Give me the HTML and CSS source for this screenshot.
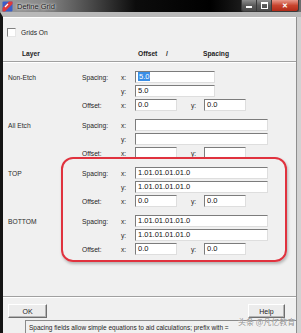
FILE: index.html
```
<!DOCTYPE html>
<html lang="en">
<head>
  <meta charset="UTF-8" />
  <title>Define Grid</title>
  <link rel="stylesheet" href="styles.css">
</head>
<body>
  <div class="window">
    <div class="titlebar">
      <svg class="app-icon" width="11" height="11" viewBox="0 0 11 11">
        <rect x="0.5" y="0.5" width="10" height="10" rx="1" fill="#3a5fc8" />
        <path d="M0.5 7 L7 0.5 L10.5 0.5 L10.5 3 L3 10.5 L0.5 10.5 Z" fill="#e03a3a" />
        <path d="M3 6 L6 3" stroke="#fff" stroke-width="1.2" />
      </svg>
      <span class="title">Define Grid</span>
      <div class="caption-btns">
        <span class="cbtn min"><i></i></span>
        <span class="cbtn max"><i></i></span>
        <span class="cbtn close">&#x2715;</span>
      </div>
    </div>

    <div class="frame">
      <div class="client">
        <label class="check"><span class="box"></span>Grids On</label>

        <div class="heads">
          <span class="h-layer">Layer</span>
          <span class="h-offset">Offset</span>
          <span class="h-slash">/</span>
          <span>Spacing</span>
        </div>
        <div class="rule"></div>

        <div class="group">
          <span class="layer">Non-Etch</span>
          <span class="sub">Spacing:</span><span class="ax">x:</span>
          <div class="field mid"><span class="sel">5.0</span></div>
          <span class="ax r2">y:</span>
          <div class="field mid">5.0</div>
          <span class="sub">Offset:</span><span class="ax">x:</span>
          <div class="pair"><div class="field short">0.0</div><span class="ay">y:</span><div class="field short">0.0</div></div>
        </div>

        <div class="group">
          <span class="layer">All Etch</span>
          <span class="sub">Spacing:</span><span class="ax">x:</span>
          <div class="field long"></div>
          <span class="ax r2">y:</span>
          <div class="field long"></div>
          <span class="sub">Offset:</span><span class="ax">x:</span>
          <div class="pair"><div class="field short"></div><span class="ay">y:</span><div class="field short"></div></div>
        </div>

        <div class="group">
          <span class="layer">TOP</span>
          <span class="sub">Spacing:</span><span class="ax">x:</span>
          <div class="field long">1.01.01.01.01.0</div>
          <span class="ax r2">y:</span>
          <div class="field long">1.01.01.01.01.0</div>
          <span class="sub">Offset:</span><span class="ax">x:</span>
          <div class="pair"><div class="field short">0.0</div><span class="ay">y:</span><div class="field short">0.0</div></div>
        </div>

        <div class="group">
          <span class="layer">BOTTOM</span>
          <span class="sub">Spacing:</span><span class="ax">x:</span>
          <div class="field long">1.01.01.01.01.0</div>
          <span class="ax r2">y:</span>
          <div class="field long">1.01.01.01.01.0</div>
          <span class="sub">Offset:</span><span class="ax">x:</span>
          <div class="pair"><div class="field short">0.0</div><span class="ay">y:</span><div class="field short">0.0</div></div>
        </div>

        <div class="footer">
          <div class="buttons">
            <span class="btn ok">OK</span>
            <span class="btn help">Help</span>
          </div>
        </div>
        <div class="status">
          <span class="status-left"></span>
          <span class="status-text">Spacing fields allow simple equations to aid calculations; prefix with =</span>
        </div>
      </div>
      <div class="strip"></div>
    </div>

    <div class="mark"></div>
    <div class="watermark">头条 @凡亿教育</div>
  </div>
</body>
</html>
```
FILE: styles.css
```
html, body {
  margin: 0;
  padding: 0;
}
body {
  width: 301px;
  height: 333px;
  overflow: hidden;
  font-family: "Liberation Sans", Arial, sans-serif;
  font-size: 6.7px;
  color: #1e1e1e;
}
.window {
  position: relative;
  width: 301px;
  height: 333px;
  display: flex;
  flex-direction: column;
  background: #111;
}

/* title bar */
.titlebar {
  height: 12px;
  display: flex;
  align-items: center;
  background: linear-gradient(90deg, #9c9c9c 0, #8a8a8a 14%, #4a4a4a 30%, #0c0c0c 45%, #000 70%, #1a1a1a 80%, #6e6e6e 100%);
}
.app-icon {
  margin-left: 2px;
}
.title {
  margin-left: 4px;
  font-size: 7.5px;
  color: #1a1a1a;
  text-shadow: 0 0 3px #e8e8e8, 0 0 2px #e8e8e8;
}
.caption-btns {
  margin-left: auto;
  margin-right: 2px;
  display: flex;
  align-self: flex-start;
  height: 12px;
}
.cbtn {
  display: flex;
  align-items: center;
  justify-content: center;
  height: 12px;
  border: 1px solid #3a3a3a;
  border-top: none;
  box-sizing: border-box;
  background: linear-gradient(#8d8d8d, #5a5a5a 50%, #4a4a4a);
  color: #fff;
}
.cbtn.min {
  width: 16px;
  border-radius: 0 0 0 3px;
}
.cbtn.min i {
  width: 6px;
  height: 2px;
  margin-top: 3px;
  background: #fff;
}
.cbtn.max {
  width: 15px;
  border-left: none;
}
.cbtn.max i {
  width: 5px;
  height: 4px;
  border: 1px solid #fff;
  border-top-width: 2px;
}
.cbtn.close {
  width: 27px;
  border-left: none;
  border-radius: 0 0 3px 0;
  font-size: 7px;
  font-weight: bold;
  background: linear-gradient(#e89a8c, #c8442e 50%, #b22a18);
}

/* frame */
.frame {
  flex: 1;
  display: flex;
  border-top: 5px solid #b9b9b9;
  border-left: 3px solid #141414;
}
.client {
  flex: 1;
  display: flex;
  flex-direction: column;
  background: #f0f0f0;
  border-right: 1px solid #8e8e8e;
  box-shadow: inset 0 1px #fff;
}
.strip {
  width: 4px;
  background: #d2d2d2;
}

.check {
  display: flex;
  align-items: center;
  height: 11px;
  margin: 10px 0 0 4px;
}
.box {
  width: 7px;
  height: 7px;
  margin-right: 5px;
  background: #fff;
  border: 1px solid;
  border-color: #808080 #e6e6e6 #e6e6e6 #808080;
}

.heads {
  display: flex;
  align-items: center;
  height: 10px;
  margin-top: 10px;
  padding-left: 19px;
  font-weight: bold;
}
.h-layer {
  width: 116px;
}
.h-offset {
  width: 28px;
}
.h-slash {
  width: 37px;
}
.rule {
  height: 1px;
  margin-top: 3px;
  background: #a0a0a0;
  border-bottom: 1px solid #fff;
}

/* layer groups */
.group {
  display: grid;
  grid-template-columns: 74px 39px 14px 1fr;
  grid-auto-rows: 14px;
  align-items: center;
  padding-left: 5px;
  margin-top: 6px;
}
.rule + .group {
  margin-top: 7px;
}
.layer {
  grid-row: 1;
  grid-column: 1;
  color: #2a2a2a;
}
.sub {
  grid-column: 2;
}
.ax {
  grid-column: 3;
}
.ax.r2 {
  grid-column: 3;
}
.field {
  grid-column: 4;
  height: 12px;
  box-sizing: border-box;
  padding: 0 2px;
  background: #fff;
  border: 1px solid;
  border-color: #7c7c7c #dedede #dedede #7c7c7c;
  font-size: 7.5px;
  line-height: 10px;
  color: #111;
  white-space: nowrap;
}
.field.mid {
  width: 80px;
}
.field.long {
  width: 133px;
}
.field.short {
  width: 42px;
}
.sel {
  background: #3a8ee6;
  color: #fff;
  padding: 0 1px;
}
.pair {
  grid-column: 4;
  display: flex;
  align-items: center;
}
.ay {
  width: 13px;
  margin-left: 14px;
}

/* footer */
.footer {
  margin-top: auto;
  border-top: 1px solid #a0a0a0;
  box-shadow: inset 0 1px #fff;
  padding: 7px 11px 2px 5px;
}
.buttons {
  display: flex;
  justify-content: space-between;
}
.btn {
  display: flex;
  align-items: center;
  justify-content: center;
  height: 14px;
  box-sizing: border-box;
  background: #ececec;
  border: 1px solid;
  border-color: #fff #6e6e6e #6e6e6e #fff;
  box-shadow: inset -1px -1px #b4b4b4;
  font-size: 7px;
}
.btn.ok {
  width: 39px;
}
.btn.help {
  width: 37px;
}
.status {
  display: flex;
  height: 13px;
}
.status-left {
  width: 22px;
}
.status-text {
  flex: 1;
  display: flex;
  align-items: center;
  padding-left: 3px;
  border-top: 1px solid #8a8a8a;
  border-left: 1px solid #8a8a8a;
  font-size: 6.5px;
  white-space: nowrap;
  overflow: hidden;
}

/* annotation overlays */
.mark {
  position: absolute;
  left: 61px;
  top: 157px;
  width: 226px;
  height: 105px;
  box-sizing: border-box;
  border: 2px solid #e0323e;
  border-radius: 12px;
  box-shadow: 1px 2px 3px rgba(0, 0, 0, 0.25);
}
.watermark {
  position: absolute;
  left: 238px;
  top: 316px;
  font-family: "Noto Sans CJK SC", sans-serif;
  font-size: 8px;
  color: rgba(120, 120, 120, 0.85);
  text-shadow: 0 0 1px #fff;
  white-space: nowrap;
}
```
